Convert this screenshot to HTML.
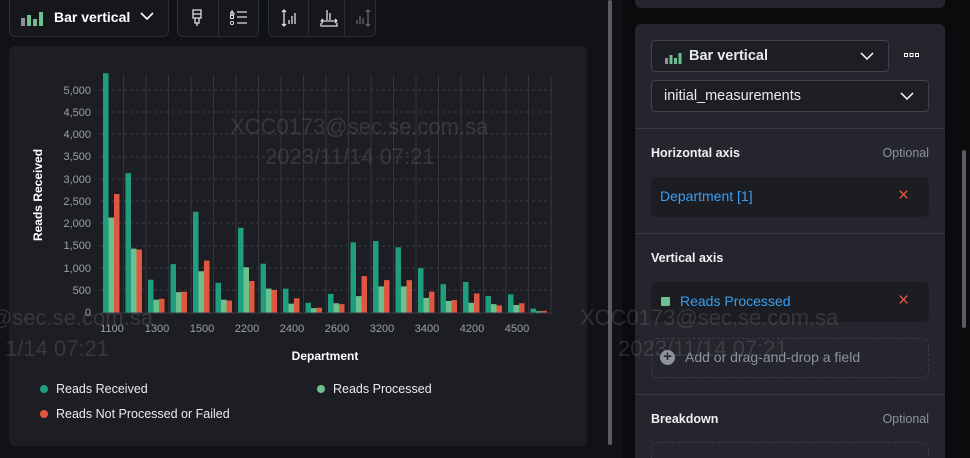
<!DOCTYPE html>
<html style="overflow:hidden"><head><style>
html,body{margin:0;width:970px;height:458px;overflow:hidden}
body{background:#111215;font-family:"Liberation Sans",sans-serif;position:relative;color:#dfe5ef}
.box{position:absolute;border:1px solid #2c2e35;border-radius:6px;background:#16171b}
.rp{position:absolute;left:635px;top:24px;width:310px;height:434px;background:#25262d;border-radius:6px 6px 0 0;overflow:hidden}
.sel{position:absolute;border:1px solid #3e414b;border-radius:4px;background:#1d1e24;font-size:15px;color:#e8ebf0}
.lbl{position:absolute;font-size:12.5px;font-weight:bold;color:#eef0f4}
.opt{position:absolute;right:16px;font-size:12.5px;color:#8d919b}
.field{position:absolute;left:16px;width:278px;height:40px;background:#1c1d22;border-radius:6px}
.hr{position:absolute;left:0;width:310px;border-top:1px solid #363842}
.wm{position:absolute;font-size:22px;color:rgba(150,150,150,.22);white-space:nowrap}
.x{position:absolute;left:247px;top:8px;color:#e0573f;font-size:19px}
</style></head><body>
<div class="box" style="left:9px;top:0;width:158px;height:36px;border-top:none;border-radius:0 0 6px 6px"></div>
<svg style="position:absolute;left:21px;top:10px" width="26" height="16"><rect x="0" y="8" width="4" height="8" fill="#8d919b"/><rect x="6" y="5" width="4" height="11" fill="#6dbf8b"/><rect x="12" y="9" width="4" height="7" fill="#6dbf8b"/><rect x="18" y="2" width="4" height="14" fill="#6dbf8b"/></svg>
<div style="position:absolute;left:54px;top:9px;font-size:14px;font-weight:bold;color:#fff">Bar vertical</div>
<svg style="position:absolute;left:140px;top:12px" width="14" height="9"><path d="M1 1l6 6 6-6" stroke="#fff" stroke-width="1.6" fill="none"/></svg>
<div class="box" style="left:177px;top:0;width:80px;height:36px;border-top:none;border-radius:0 0 6px 6px"></div>
<div style="position:absolute;left:218px;top:0;width:1px;height:37px;background:#2c2e35"></div>
<svg style="position:absolute;left:190px;top:9px" width="14" height="18"><path d="M3 1h8v8H3zM3 5h8M5 9v5h4V9M7 14v3" stroke="#ddd" stroke-width="1.3" fill="none"/></svg>
<svg style="position:absolute;left:230px;top:10px" width="18" height="16"><path d="M2 1l2 3H0zM7 2h10M7 7h10M7 13h10" stroke="#ddd" stroke-width="1.3" fill="none"/><rect x="0.5" y="5.5" width="3" height="3" stroke="#ddd" fill="none"/><circle cx="2" cy="13" r="1.6" stroke="#ddd" fill="none"/></svg>
<div class="box" style="left:268px;top:0;width:106px;height:36px;border-top:none;border-radius:0 0 6px 6px"></div>
<div style="position:absolute;left:308px;top:0;width:1px;height:37px;background:#2c2e35"></div>
<div style="position:absolute;left:344px;top:0;width:1px;height:37px;background:#2c2e35"></div>
<svg style="position:absolute;left:280px;top:8px" width="20" height="20"><path d="M4 2v16M2 4l2-2 2 2M2 16l2 2 2-2M9 12v4M12 8v8M15 5v11" stroke="#ddd" stroke-width="1.3" fill="none"/></svg>
<svg style="position:absolute;left:318px;top:8px" width="22" height="20"><path d="M9 2v10M12 5v7M3 13h16M3 13l2-2M3 13l2 2M19 13l-2-2M19 13l-2 2M3 15v3h16v-3" stroke="#ddd" stroke-width="1.3" fill="none"/></svg>
<svg style="position:absolute;left:354px;top:8px" width="20" height="20"><path d="M14 2v16M12 4l2-2 2 2M12 16l2 2 2-2M3 12v4M6 8v8M9 10v6" stroke="#666" stroke-width="1.3" fill="none"/></svg>
<div style="position:absolute;left:9px;top:46px;width:578px;height:400px;background:#1d1e23;border-radius:6px"></div>
<div style="position:absolute;left:608px;top:0;width:4px;height:445px;background:#5a5c63;border-radius:2px"></div>
<div style="position:absolute;left:622px;top:0;width:348px;height:458px;background:#0b0b0d"></div>
<div style="position:absolute;left:635px;top:0;width:310px;height:8px;background:#25262d;border-radius:0 0 6px 6px"></div>
<div style="position:absolute;left:962px;top:150px;width:4px;height:178px;background:#5a5c63;border-radius:2px"></div>
<svg style="position:absolute;left:0;top:0" width="600" height="458">
<g font-size="11" fill="#9aa0aa" text-anchor="end">
<text x="91" y="94">5,000</text><text x="91" y="116">4,500</text><text x="91" y="138">4,000</text><text x="91" y="160">3,500</text><text x="91" y="183">3,000</text><text x="91" y="205">2,500</text><text x="91" y="227">2,000</text><text x="91" y="249">1,500</text><text x="91" y="272">1,000</text><text x="91" y="294">500</text><text x="91" y="316">0</text>
</g>
<g stroke="#3a3c44" stroke-dasharray="3,3">
<line x1="100" x2="552" y1="90" y2="90"/><line x1="100" x2="552" y1="112" y2="112"/><line x1="100" x2="552" y1="134" y2="134"/><line x1="100" x2="552" y1="157" y2="157"/><line x1="100" x2="552" y1="179" y2="179"/><line x1="100" x2="552" y1="201" y2="201"/><line x1="100" x2="552" y1="223" y2="223"/><line x1="100" x2="552" y1="246" y2="246"/><line x1="100" x2="552" y1="268" y2="268"/><line x1="100" x2="552" y1="290" y2="290"/>
</g>
<g id="bars"></g>
<line x1="100" x2="552" y1="313" y2="313" stroke="#3a3c44"/>
<g font-size="11" fill="#9aa0aa" text-anchor="middle">
<text x="112" y="332">1100</text><text x="157" y="332">1300</text><text x="202" y="332">1500</text><text x="247" y="332">2200</text><text x="292" y="332">2400</text><text x="337" y="332">2600</text><text x="382" y="332">3200</text><text x="427" y="332">3400</text><text x="472" y="332">4200</text><text x="517" y="332">4500</text>
</g>
<text x="42" y="195" transform="rotate(-90 42 195)" font-size="12" font-weight="bold" fill="#fff" text-anchor="middle">Reads Received</text>
<text x="325" y="360" font-size="12" font-weight="bold" fill="#fff" text-anchor="middle">Department</text>
<circle cx="44" cy="389" r="4" fill="#1e9e7e"/><text x="56" y="393" font-size="12.5" fill="#e8ebf0">Reads Received</text>
<circle cx="321" cy="389" r="4" fill="#6dbf8b"/><text x="333" y="393" font-size="12.5" fill="#e8ebf0">Reads Processed</text>
<circle cx="44" cy="414" r="4" fill="#e0573f"/><text x="56" y="418" font-size="12.5" fill="#e8ebf0">Reads Not Processed or Failed</text>
</svg>
<div class="wm" style="left:230px;top:114px">XCC0173@sec.se.com.sa</div>
<div class="wm" style="left:265px;top:144px">2023/11/14 07:21</div>
<div class="wm" style="left:-10px;top:305px">@sec.se.com.sa</div>
<div class="wm" style="left:5px;top:336px">1/14 07:21</div>
<div class="rp">
<div class="sel" style="left:16px;top:16px;width:236px;height:30px"><svg style="position:absolute;left:13px;top:11px" width="18" height="12"><rect x="0" y="6" width="3" height="6" fill="#8d919b"/><rect x="4.5" y="3" width="3" height="9" fill="#6dbf8b"/><rect x="9" y="6" width="3" height="6" fill="#6dbf8b"/><rect x="13.5" y="1" width="3" height="11" fill="#6dbf8b"/></svg><span style="position:absolute;left:37px;top:7px;font-weight:bold;font-size:14.5px">Bar vertical</span><svg style="position:absolute;left:208px;top:11px" width="14" height="9"><path d="M1 1l6 6 6-6" stroke="#fff" stroke-width="1.5" fill="none"/></svg></div>
<svg style="position:absolute;left:269px;top:29px" width="16" height="6"><rect x="0.5" y="0.5" width="3" height="3" stroke="#fff" fill="none"/><rect x="6" y="0.5" width="3" height="3" stroke="#fff" fill="none"/><rect x="11.5" y="0.5" width="3" height="3" stroke="#fff" fill="none"/></svg>
<div class="sel" style="left:16px;top:56px;width:276px;height:30px"><span style="position:absolute;left:12px;top:7px;font-size:14.5px">initial_measurements</span><svg style="position:absolute;left:248px;top:11px" width="14" height="9"><path d="M1 1l6 6 6-6" stroke="#fff" stroke-width="1.5" fill="none"/></svg></div>
<div class="hr" style="top:104px"></div>
<div class="lbl" style="left:16px;top:122px">Horizontal axis</div><div class="opt" style="top:122px">Optional</div>
<div class="field" style="top:153px"><span style="position:absolute;left:9px;top:11px;font-size:14px;color:#3a9ef0">Department [1]</span><span class="x">×</span></div>
<div class="hr" style="top:209px"></div>
<div class="lbl" style="left:16px;top:227px">Vertical axis</div>
<div class="field" style="top:258px"><span style="position:absolute;left:10px;top:15px;width:9px;height:9px;background:#6dbf8b;border-radius:1px"></span><span style="position:absolute;left:29px;top:11px;font-size:14px;color:#3a9ef0">Reads Processed</span><span class="x">×</span></div>
<div style="position:absolute;left:16px;top:314px;width:276px;height:38px;border:1px dashed #3a3c44;border-radius:6px"><span style="position:absolute;left:8px;top:11px;width:15px;height:15px;border-radius:50%;background:#8d919b;color:#25262d;font-size:15px;line-height:14px;text-align:center;font-weight:bold">+</span><span style="position:absolute;left:33px;top:10px;font-size:14px;color:#8d919b">Add or drag-and-drop a field</span></div>
<div class="hr" style="top:370px"></div>
<div class="lbl" style="left:16px;top:388px">Breakdown</div><div class="opt" style="top:388px">Optional</div>
<div style="position:absolute;left:16px;top:418px;width:276px;height:20px;border:1px dashed #3a3c44;border-bottom:none;border-radius:6px 6px 0 0"></div>
</div>
<div class="wm" style="left:580px;top:305px">XCC0173@sec.se.com.sa</div>
<div class="wm" style="left:618px;top:336px">2023/11/14 07:21</div>
<script>
var d=[[5400,2150,2680],[3150,1450,1430],[750,300,320],[1100,470,480],[2280,940,1180],[680,300,280],[1920,1030,720],[1110,550,520],[550,210,330],[230,110,120],[430,220,200],[1590,380,830],[1620,600,740],[1480,600,740],[1010,340,480],[650,270,290],[700,230,440],[380,200,170],[420,180,220],[100,40,50]];
var c=["#1e9e7e","#6dbf8b","#e0573f"],s="";
for(var i=0;i<20;i++){var x=103+i*22.5;s+='<line x1="'+(x+20.5)+'" x2="'+(x+20.5)+'" y1="75" y2="313" stroke="#33353c"/>';
for(var j=0;j<3;j++){var h=d[i][j]*0.0444;s+='<rect x="'+(x+j*5.5)+'" y="'+(313-h)+'" width="5.5" height="'+h+'" fill="'+c[j]+'"/>';}}
document.getElementById('bars').innerHTML=s;
</script>
</body></html>
